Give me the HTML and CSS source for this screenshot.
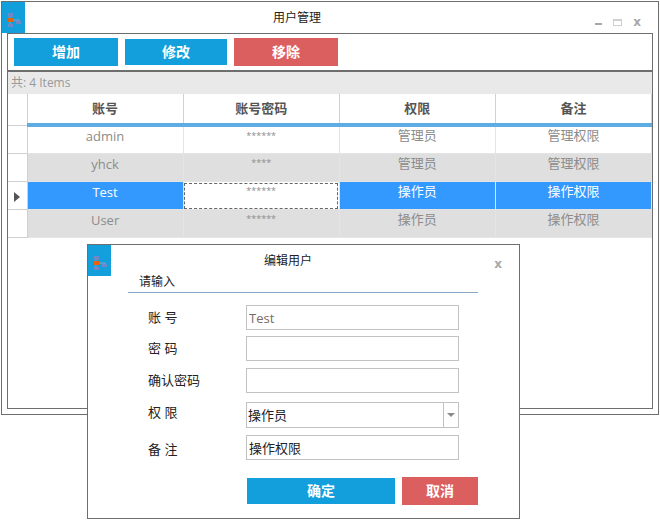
FILE: index.html
```html
<!DOCTYPE html>
<html lang="zh-CN">
<head>
  <meta charset="UTF-8" />
  <title>用户管理</title>
  <link rel="stylesheet" href="styles.css">
</head>
<body>
  <div class="window main-window">
    <div class="titlebar">
      <svg class="app-icon" viewBox="0 0 23 31">
        <rect width="23" height="31" fill="#129fdc"/>
        <path d="M8 13v11M8 18h9v3" stroke="#8f9fc4" fill="none"/>
        <rect x="6" y="11" width="5" height="4" fill="#6d8ac8"/>
        <rect x="6" y="16" width="5" height="4" fill="#e8620c"/>
        <rect x="14" y="19" width="5" height="3" fill="#6d8ac8"/>
        <rect x="6" y="22" width="5" height="3" fill="#6d8ac8"/>
      </svg>
      <span class="title">用户管理</span>
      <div class="win-controls">
        <span class="ctl-min"></span>
        <span class="ctl-max"></span>
        <span class="ctl-close">x</span>
      </div>
    </div>

    <div class="panel">
      <div class="toolbar">
        <button class="btn btn-blue">增加</button>
        <button class="btn btn-blue btn-small">修改</button>
        <button class="btn btn-red">移除</button>
      </div>
      <div class="count-bar">共: 4 Items</div>
      <table class="grid">
        <thead>
          <tr>
            <th class="row-head"></th>
            <th>账号</th>
            <th>账号密码</th>
            <th>权限</th>
            <th>备注</th>
          </tr>
        </thead>
        <tbody>
          <tr>
            <td class="row-head"></td>
            <td>admin</td>
            <td class="pwd">******</td>
            <td class="cn">管理员</td>
            <td class="cn">管理权限</td>
          </tr>
          <tr class="alt">
            <td class="row-head"></td>
            <td>yhck</td>
            <td class="pwd">****</td>
            <td class="cn">管理员</td>
            <td class="cn">管理权限</td>
          </tr>
          <tr class="selected">
            <td class="row-head"><span class="arrow"></span></td>
            <td>Test</td>
            <td class="pwd current">******</td>
            <td class="cn">操作员</td>
            <td class="cn">操作权限</td>
          </tr>
          <tr class="alt">
            <td class="row-head"></td>
            <td>User</td>
            <td class="pwd">******</td>
            <td class="cn">操作员</td>
            <td class="cn">操作权限</td>
          </tr>
        </tbody>
      </table>
    </div>
  </div>

  <div class="window dialog">
    <div class="titlebar dialog-bar">
      <svg class="app-icon" viewBox="0 0 23 31">
        <rect width="23" height="31" fill="#129fdc"/>
        <path d="M8 13v11M8 18h9v3" stroke="#8f9fc4" fill="none"/>
        <rect x="6" y="11" width="5" height="4" fill="#6d8ac8"/>
        <rect x="6" y="16" width="5" height="4" fill="#e8620c"/>
        <rect x="14" y="19" width="5" height="3" fill="#6d8ac8"/>
        <rect x="6" y="22" width="5" height="3" fill="#6d8ac8"/>
      </svg>
      <span class="title">编辑用户</span>
      <span class="ctl-close dialog-close">x</span>
    </div>

    <div class="section-title">请输入</div>

    <form class="edit-form">
      <div class="form-group gap-6">
        <label>账 号</label>
        <input type="text" class="field" value="Test">
      </div>
      <div class="form-group gap-7">
        <label>密 码</label>
        <input type="text" class="field">
      </div>
      <div class="form-group gap-9">
        <label>确认密码</label>
        <input type="text" class="field">
      </div>
      <div class="form-group gap-7 tall">
        <label class="label-high">权 限</label>
        <div class="field select">
          <span class="select-value">操作员</span>
          <span class="select-arrow"></span>
        </div>
      </div>
      <div class="form-group">
        <label class="label-low">备 注</label>
        <input type="text" class="field dark" value="操作权限">
      </div>
      <div class="form-actions">
        <button type="button" class="btn btn-blue btn-ok">确定</button>
        <button type="button" class="btn btn-red btn-cancel">取消</button>
      </div>
    </form>
  </div>
</body>
</html>
```

FILE: styles.css
```css
* {
  margin: 0;
  padding: 0;
  box-sizing: border-box;
}

body {
  width: 660px;
  height: 522px;
  overflow: hidden;
  position: relative;
  background-color: #fff;
  font-family: "Open Sans", "Noto Sans CJK SC", sans-serif;
  font-size: 13px;
  color: #333;
}

.window {
  position: absolute;
  background-color: #fff;
  border: 1px solid #6e6e6e;
}

.main-window {
  left: 1px;
  top: 1px;
  width: 658px;
  height: 414px;
}

.dialog {
  left: 87px;
  top: 244px;
  width: 433px;
  height: 275px;
}

.titlebar {
  display: flex;
  align-items: flex-start;
  position: relative;
  height: 31px;
}

.app-icon {
  display: block;
  width: 23px;
  height: 31px;
  flex: none;
}

.title {
  position: absolute;
  left: 0;
  right: 66px;
  top: 7px;
  text-align: center;
  font-size: 12px;
  line-height: 17px;
  color: #222;
}

.dialog-bar .title {
  right: 31px;
}

.win-controls {
  position: absolute;
  right: 17px;
  top: 15px;
  display: flex;
  align-items: flex-start;
  gap: 11px;
}

.ctl-min {
  width: 7px;
  height: 2px;
  margin-top: 6px;
  background-color: #a8a8a8;
}

.ctl-max {
  width: 9px;
  height: 7px;
  margin-top: 2px;
  border: 1px solid #cfcfcf;
  border-top-width: 2px;
}

.ctl-close {
  font-family: "DejaVu Sans", sans-serif;
  font-size: 12px;
  font-weight: bold;
  line-height: 10px;
  color: #a8a8a8;
}

.dialog-close {
  position: absolute;
  right: 17px;
  top: 14px;
}

.panel {
  margin: 0 5px;
  height: 376px;
  border: 1px solid #6e6e6e;
}

.toolbar {
  display: flex;
  align-items: flex-start;
  gap: 7px;
  height: 38px;
  padding: 4px 6px 0;
  border-bottom: 2px solid #6e6e6e;
}

.btn {
  display: block;
  width: 104px;
  height: 28px;
  border: none;
  color: #fff;
  font-family: inherit;
  font-size: 14px;
  font-weight: 700;
  line-height: 24px;
}

.btn-blue {
  background-color: #129fdc;
}

.btn-red {
  background-color: #dc5f60;
}

.btn-small {
  width: 102px;
  height: 26px;
  margin-top: 1px;
}

.count-bar {
  height: 22px;
  padding-left: 3px;
  background-color: #e9e9e9;
  font-size: 12px;
  line-height: 22px;
  color: #999;
}

.grid {
  width: 644px;
  table-layout: fixed;
  border-collapse: collapse;
}

.grid th {
  height: 31px;
  padding-bottom: 2px;
  border-right: 1px solid #d0d0d0;
  border-bottom: 4px solid #5dade2;
  font-size: 13px;
  font-weight: 700;
  color: #555;
}

.grid th.row-head {
  width: 19px;
  border-bottom: 1px solid #d0d0d0;
}

.grid td {
  height: 28px;
  padding-bottom: 8px;
  border-right: 1px solid #e4e4e4;
  border-bottom: 1px solid #e4e4e4;
  text-align: center;
  line-height: 16px;
  color: #8c8c8c;
}

.grid td.cn {
  padding-bottom: 10px;
}

.grid td.row-head {
  padding: 0;
  border-right: 1px solid #d0d0d0;
  border-bottom: 1px solid #d0d0d0;
  background-color: #fff;
}

.grid .alt td {
  background-color: #dfdfdf;
}

.grid .alt td.row-head,
.grid .selected td.row-head {
  background-color: #fff;
}

.grid .selected td {
  background-color: #3399ff;
  color: #fff;
}

.grid td.pwd {
  font-size: 9px;
  padding-bottom: 9px;
}

.grid .selected td.current {
  background-color: #fff;
  color: #8c8c8c;
  outline: 1px dashed #666;
  outline-offset: -2px;
}

.arrow {
  display: inline-block;
  margin-top: 5px;
  border-left: 6px solid #555;
  border-top: 5px solid transparent;
  border-bottom: 5px solid transparent;
}

.section-title {
  margin: 0 41px 0 40px;
  height: 17px;
  padding-left: 11px;
  border-bottom: 1px solid #8aa8c4;
  font-size: 12px;
  line-height: 12px;
  color: #222;
}

.edit-form {
  padding: 12px 0 0 60px;
}

.form-group {
  display: flex;
  align-items: center;
  height: 25px;
}

.gap-6 {
  margin-bottom: 6px;
}

.gap-7 {
  margin-bottom: 7px;
}

.gap-9 {
  margin-bottom: 9px;
}

.tall {
  height: 26px;
}

.form-group label {
  width: 98px;
  flex: none;
  padding-bottom: 2px;
  font-size: 13px;
  color: #222;
}

.form-group .label-low {
  padding-top: 3px;
}

.form-group .label-high {
  padding-bottom: 8px;
}

.field {
  width: 213px;
  height: 100%;
  padding: 0 2px;
  border: 1px solid #c2c2c2;
  font-family: inherit;
  font-size: 13px;
  color: #7a6a62;
  background-color: #fff;
}

.field.dark {
  color: #222;
}

.select {
  display: flex;
  align-items: center;
  padding-left: 1px;
  color: #222;
}

.select-value {
  flex: 1;
  margin-top: -2px;
}

.select-arrow {
  display: flex;
  flex: none;
  align-items: center;
  justify-content: center;
  width: 15px;
  height: 100%;
  margin-right: -2px;
  border-left: 1px solid #c2c2c2;
}

.select-arrow::before {
  content: "";
  border-top: 4px solid #8a8a8a;
  border-left: 4px solid transparent;
  border-right: 4px solid transparent;
}

.form-actions {
  display: flex;
  align-items: center;
  gap: 7px;
  margin: 17px 0 0 99px;
}

.btn-ok {
  width: 148px;
  height: 26px;
}

.btn-cancel {
  width: 76px;
  height: 28px;
}
```
